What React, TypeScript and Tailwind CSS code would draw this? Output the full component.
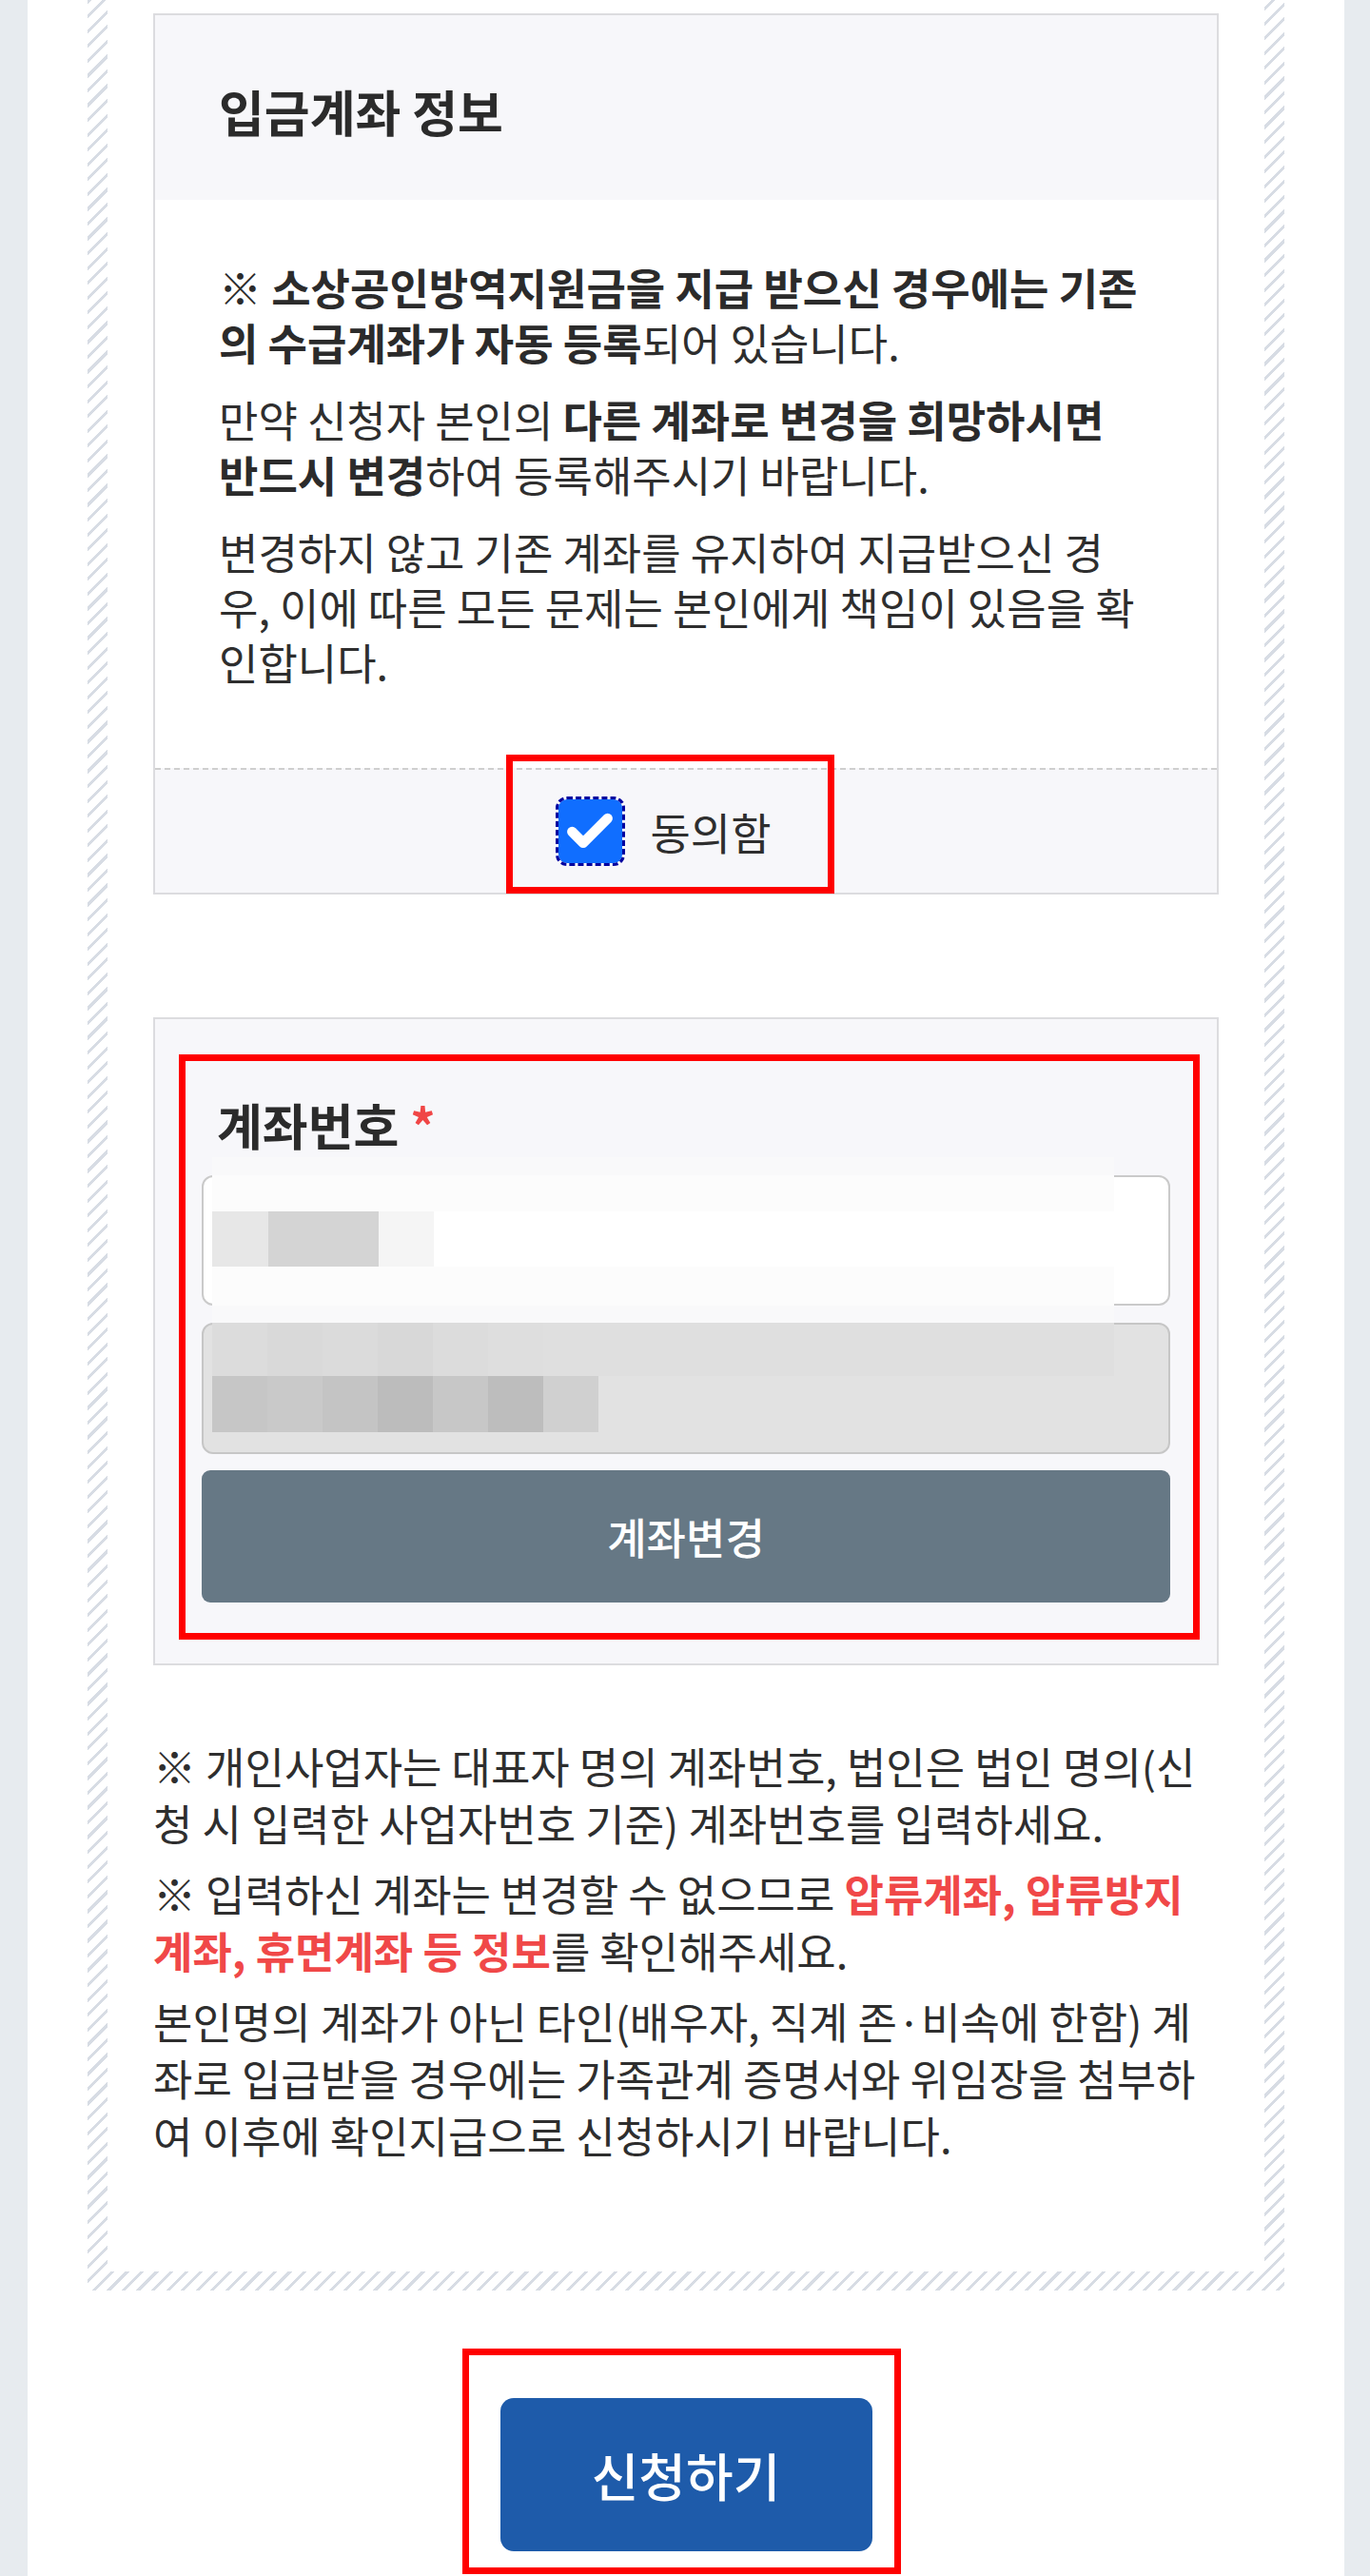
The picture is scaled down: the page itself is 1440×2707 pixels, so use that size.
import { Check } from 'lucide-react';

const topBlocks = ['#dcdcdc', '#d9d9d9', '#dbdbdb', '#d8d8d8', '#dcdcdc', '#dedede', '#dfdfdf'];
const bottomBlocks = ['#c6c6c6', '#c9c9c9', '#c4c4c4', '#bcbcbc', '#c7c7c7', '#bdbdbd', '#d0d0d0'];

function AgreeBox() {
  return (
    <label className="relative flex items-center gap-[30px] pr-[45px]">
      {/* annotation box */}
      <span className="absolute left-[-55px] top-[-47px] w-[345px] h-[146px] border-[7px] border-[#ff0000]" />
      <span className="flex items-center justify-center w-[67px] h-[67px] rounded-[9px] bg-[#106eff] outline-[3px] outline-dashed outline-[#0000a0]">
        <Check className="w-[56px] h-[56px] text-white" strokeWidth={4.5} />
      </span>
      <span className="text-[46px] leading-[1.2] text-[#2e2e2e]">동의함</span>
    </label>
  );
}

function AccountCard() {
  return (
    <section className="relative mt-[129px] border-2 border-[#dcdcdf] bg-[#f7f7fa] px-[49px] pt-[82px] pb-[64px]">
      {/* annotation box */}
      <div className="absolute left-[25px] top-[37px] w-[1073px] h-[615px] border-[7px] border-[#ff0000]" />

      <h3 className="pl-[16px] text-[52px] leading-[58px] font-bold text-[#2b2b2b]">
        계좌번호 <span className="text-[#f04646]">*</span>
      </h3>

      <div className="mt-[24px] flex flex-col gap-[18px]">
        <div className="h-[137px] rounded-[12px] border-2 border-[#cacaca] bg-white" />
        <div className="h-[138px] rounded-[12px] border-2 border-[#c6c6c6] bg-[#e2e2e2]" />
        <button className="mt-[-1px] h-[139px] rounded-[9px] bg-[#667885] text-[45px] font-medium text-white">
          계좌변경
        </button>
      </div>

      {/* masked account values */}
      <div className="absolute left-[60px] top-[145px] w-[948px] flex flex-col">
        <div className="h-[19px] bg-[#f9f9fa]" />
        <div className="h-[38px] bg-[#fcfcfc]" />
        <div className="h-[58px] flex">
          <div className="w-[59px] bg-[#e7e7e7]" />
          <div className="w-[116px] bg-[#d4d4d4]" />
          <div className="w-[58px] bg-[#f5f5f5]" />
          <div className="flex-1 bg-white" />
        </div>
        <div className="h-[41px] bg-[#fcfcfc]" />
        <div className="h-[18px] bg-[#f9f9fa]" />
        <div className="h-[56px] flex bg-[#dfdfdf]">
          {topBlocks.map((c, i) => (
            <div key={i} className="w-[58px]" style={{ backgroundColor: c }} />
          ))}
        </div>
        <div className="h-[59px] flex bg-[#e2e2e2]">
          {bottomBlocks.map((c, i) => (
            <div key={i} className="w-[58px]" style={{ backgroundColor: c }} />
          ))}
        </div>
      </div>
    </section>
  );
}

export default function App() {
  return (
    <div className="min-h-screen bg-[#e7ebef] font-['Noto_Sans_CJK_KR','Noto_Sans',sans-serif] text-[#2e2e2e]">
      <div className="ml-[29px] w-[1384px] min-h-[2707px] bg-white">
        {/* hatched frame */}
        <div className="mx-[63px] px-[21px] pb-[20px] bg-[repeating-linear-gradient(135deg,#d7dce4_0px,#d7dce4_3px,#ffffff_3px,#ffffff_11px)]">
          <div className="bg-white px-[48px] pt-[14px] pb-[113px]">
            {/* 입금계좌 정보 */}
            <section className="border-2 border-[#dcdcdf]">
              <div className="h-[194px] bg-[#f7f7fa] px-[67px] pt-[8px] flex items-center">
                <h2 className="text-[52px] leading-[1.2] font-bold text-[#2b2b2b]">입금계좌 정보</h2>
              </div>
              <div className="bg-white px-[67px] pt-[63px] pb-[82px] text-[45px] leading-[58px]">
                <p>
                  <b className="font-bold text-[#2b2b2b]">※ 소상공인방역지원금을 지급 받으신 경우에는 기존의 수급계좌가 자동 등록</b>되어 있습니다.
                </p>
                <p className="mt-[23px]">
                  만약 신청자 본인의 <b className="font-bold text-[#2b2b2b]">다른 계좌로 변경을 희망하시면<br />반드시 변경</b>하여 등록해주시기 바랍니다.
                </p>
                <p className="mt-[23px]">
                  변경하지 않고 기존 계좌를 유지하여 지급받으신 경우, 이에 따른 모든 문제는 본인에게 책임이 있음을 확인합니다.
                </p>
              </div>
              <div className="h-[131px] border-t-2 border-dashed border-[#cfcfcf] bg-[#f7f7fa] flex items-center justify-center">
                <AgreeBox />
              </div>
            </section>

            <AccountCard />

            {/* notes */}
            <div className="mt-[76px] text-[45px] leading-[60px]">
              <p>※ 개인사업자는 대표자 명의 계좌번호, 법인은 법인 명의(신청 시 입력한 사업자번호 기준) 계좌번호를 입력하세요.</p>
              <p className="mt-[14px]">
                ※ 입력하신 계좌는 변경할 수 없으므로{' '}
                <b className="font-bold text-[#f04848]">압류계좌, 압류방지 계좌, 휴면계좌 등 정보</b>를 확인해주세요.
              </p>
              <p className="mt-[14px]">
                본인명의 계좌가 아닌 타인(배우자, 직계 존·비속에 한함) 계좌로 입급받을 경우에는 가족관계 증명서와 위임장을 첨부하여 이후에 확인지급으로 신청하시기 바랍니다.
              </p>
            </div>
          </div>
        </div>

        {/* submit */}
        <div className="flex justify-center pt-[113px]">
          <div className="relative">
            <span className="absolute left-[-40px] top-[-52px] w-[461px] h-[237px] border-[7px] border-[#ff0000]" />
            <button className="relative w-[391px] h-[161px] rounded-[14px] bg-[#1e5baa] text-[54px] font-medium text-white">
              신청하기
            </button>
          </div>
        </div>
      </div>
    </div>
  );
}
